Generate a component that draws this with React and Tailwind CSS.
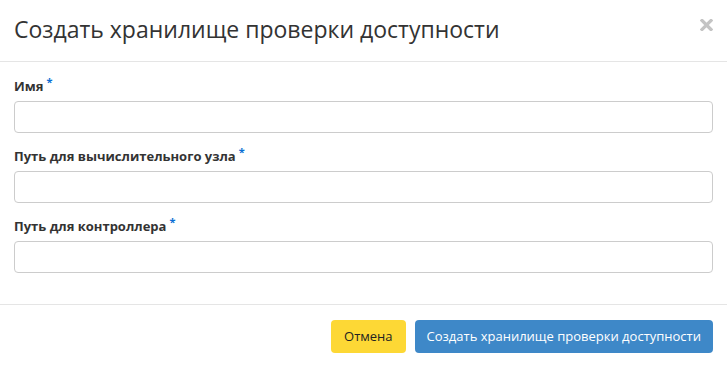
export default function App() {
  const fields = [
    { id: "name", label: "Имя" },
    { id: "compute", label: "Путь для вычислительного узла" },
    { id: "controller", label: "Путь для контроллера" },
  ];

  return (
    <div className="h-[365px] w-[727px] overflow-hidden bg-white text-[#333] [font-family:'Open_Sans',sans-serif]">
      {/* шапка */}
      <div className="flex h-[62px] items-start justify-between border-b border-[#e5e5e5] pl-[14px] pr-[14px] pt-[14px]">
        <h4 className="text-[23px] leading-[31px] text-[#333]">Создать хранилище проверки доступности</h4>
        <svg width="13" height="12" viewBox="0 0 13 12" className="mt-[5px]">
          <path d="M2 1.5 L11 10.5 M11 1.5 L2 10.5" stroke="#c4c4c4" strokeWidth="3.2" strokeLinecap="square" />
        </svg>
      </div>

      {/* форма */}
      <div className="px-[14px] pb-[16px] pt-[15px]">
        {fields.map((f) => (
          <div key={f.id} className="mb-[14px] last:mb-0">
            <label className="mb-[5px] block h-[19px] text-[13px] font-bold leading-[19px] text-[#333]">
              {f.label}
              <span className="relative -top-[5px] ml-[3px] text-[11px] text-[#0a6fd4]">*</span>
            </label>
            <input className="block h-[32px] w-full rounded-[4px] border border-[#ccc] px-3 text-[13px] outline-none" />
          </div>
        ))}
      </div>

      {/* подвал */}
      <div className="mt-[15px] flex justify-end gap-[9px] border-t border-[#e5e5e5] px-[14px] pt-[15px]">
        <button className="h-[33px] rounded-[4px] bg-[#fdd835] px-[13px] text-[13px] text-[#222]">Отмена</button>
        <button className="h-[33px] rounded-[4px] bg-[#3e88c8] px-[12px] text-[13px] text-white">
          Создать хранилище проверки доступности
        </button>
      </div>
    </div>
  );
}
